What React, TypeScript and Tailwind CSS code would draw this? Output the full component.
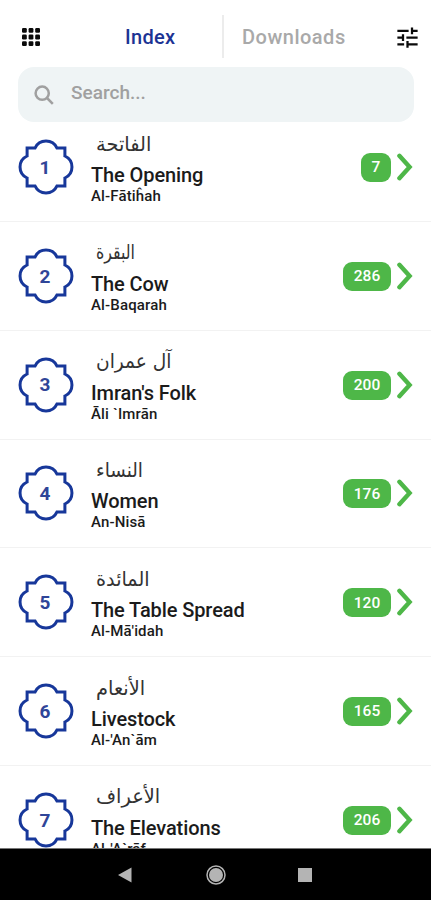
type Surah = {
  id: number;
  arabic: string;
  arabicClass: string;
  title: string;
  name: string;
  verses: number;
};

const surahs: Surah[] = [
  { id: 1, arabic: "الفاتحة", arabicClass: "scale-x-[0.97]", title: "The Opening", name: "Al-Fātiĥah", verses: 7 },
  { id: 2, arabic: "البقرة", arabicClass: "scale-x-[0.79]", title: "The Cow", name: "Al-Baqarah", verses: 286 },
  { id: 3, arabic: "آل عمران", arabicClass: "scale-x-[0.93]", title: "Imran's Folk", name: "Āli `Imrān", verses: 200 },
  { id: 4, arabic: "النساء", arabicClass: "scale-x-[0.92]", title: "Women", name: "An-Nisā", verses: 176 },
  { id: 5, arabic: "المائدة", arabicClass: "scale-x-[0.96]", title: "The Table Spread", name: "Al-Mā'idah", verses: 120 },
  { id: 6, arabic: "الأنعام", arabicClass: "scale-x-[0.97]", title: "Livestock", name: "Al-'An`ām", verses: 165 },
  { id: 7, arabic: "الأعراف", arabicClass: "scale-x-[0.97]", title: "The Elevations", name: "Al-'A`rāf", verses: 206 },
];

export default function App() {
  return (
    <div className="flex h-[900px] w-[431px] flex-col overflow-hidden bg-white font-['Roboto',sans-serif] text-[#1b1b1b]">
      <Header />
      <SearchBar />
      <main className="min-h-0 flex-1 overflow-hidden">
        <ul className="-mt-[8.8px]">
          {surahs.map((surah) => (
            <SurahRow key={surah.id} surah={surah} />
          ))}
        </ul>
      </main>
      <NavigationBar />
    </div>
  );
}

function Header() {
  return (
    <header className="flex h-[67px] shrink-0 items-center pt-[7px] pr-[10.5px] pl-[22px]">
      <svg viewBox="0 0 18 18" className="size-[18px]" fill="#0a0a0a">
        {[0, 6.6, 13.2].map((y) =>
          [0, 6.6, 13.2].map((x) => <rect key={`${x}-${y}`} x={x} y={y} width="4.8" height="4.8" rx="1.2" />),
        )}
      </svg>
      <nav className="flex flex-1 items-center text-[20px] font-medium">
        <span className="w-[182px] pl-[85px] tracking-[0.3px] text-[#1c3394]">Index</span>
        <span className="-mt-[2px] h-[43px] w-[2px] bg-[#ececec]" />
        <span className="pl-[18px] tracking-[0.5px] text-[#a9a9a9]">Downloads</span>
      </nav>
      <svg viewBox="0 0 24 24" className="size-[27px]" fill="#0a0a0a">
        <path d="M3 17v2h6v-2H3zM3 5v2h10V5H3zm10 16v-2h8v-2h-8v-2h-2v6h2zM7 9v2H3v2h4v2h2V9H7zm14 4v-2H11v2h10zm-6-4h2V7h4V5h-4V3h-2v6z" />
      </svg>
    </header>
  );
}

function SearchBar() {
  return (
    <div className="mr-[17px] ml-[18px] flex h-[55px] shrink-0 items-center rounded-[16px] bg-[#eff4f5] pl-[16px] text-[#a0a0a0]">
      <svg viewBox="0 0 20 20" className="size-[20px]" fill="none" stroke="currentColor" strokeWidth="2.5">
        <circle cx="8.2" cy="8.2" r="6.6" />
        <path d="M13 13l5.8 5.8" />
      </svg>
      <span className="mb-[2px] ml-[17px] text-[19px] font-medium">Search...</span>
    </div>
  );
}

function SurahRow({ surah }: { surah: Surah }) {
  return (
    <li className="flex h-[108.8px] items-center border-b border-[#f2f2f2] pr-[18px] pl-[17.5px]">
      <NumberBadge value={surah.id} />
      <div className="mt-[2.5px] ml-[17.5px] flex-1">
        <p className="ml-[5px] flex h-[24px] items-center font-['DejaVu_Sans',sans-serif] text-[20px] whitespace-nowrap text-[#333]">
          <span dir="rtl" lang="ar" className={`origin-left ${surah.arabicClass}`}>
            {surah.arabic}
          </span>
        </p>
        <h2 className="mt-[7.5px] text-[20px] leading-[24px] font-medium tracking-[-0.1px] whitespace-nowrap">
          {surah.title}
        </h2>
        <p className="text-[15px] leading-[18px] font-medium tracking-[0.15px] whitespace-nowrap">{surah.name}</p>
      </div>
      <span className="mt-[1px] flex h-[29px] items-center rounded-[9px] bg-[#4eb748] px-[10.8px] pt-[1px] text-[15.5px] font-medium text-white">
        {surah.verses}
      </span>
      <svg viewBox="0 0 16 28" className="ml-[6px] h-[28px] w-[16px]" fill="none" stroke="#4eb748" strokeWidth="4.4" strokeLinecap="round">
        <path d="M2.4 2.8L12.6 14L2.4 25.2" />
      </svg>
    </li>
  );
}

function NumberBadge({ value }: { value: number }) {
  return (
    <div className="relative flex size-[56px] shrink-0 items-center justify-center">
      <svg viewBox="0 0 56 56" className="absolute inset-0 size-full" fill="none" stroke="#17379a" strokeWidth="3">
        <path d="M9.1 9.1H17A12.1 12.1 0 0 1 39 9.1H46.9V17A12.1 12.1 0 0 1 46.9 39V46.9H39A12.1 12.1 0 0 1 17 46.9H9.1V39A12.1 12.1 0 0 1 9.1 17Z" />
      </svg>
      <span className="mt-[2px] mr-[1px] text-[19px] font-bold text-[#2f4598]">{value}</span>
    </div>
  );
}

function NavigationBar() {
  return (
    <footer className="flex h-[52px] shrink-0 items-center border-t border-[#777] bg-black pl-[117px]">
      <svg viewBox="0 0 16 16" className="size-[16px]" fill="#b4b4b4">
        <path d="M1 8L14.5 0.5V15.5Z" />
      </svg>
      <svg viewBox="0 0 20 20" className="ml-[73px] size-[20px]" fill="none" stroke="#b4b4b4">
        <circle cx="10" cy="10" r="9" strokeWidth="1.5" />
        <circle cx="10" cy="10" r="7" fill="#b4b4b4" stroke="none" />
      </svg>
      <span className="ml-[72px] size-[14px] bg-[#b4b4b4]" />
    </footer>
  );
}
